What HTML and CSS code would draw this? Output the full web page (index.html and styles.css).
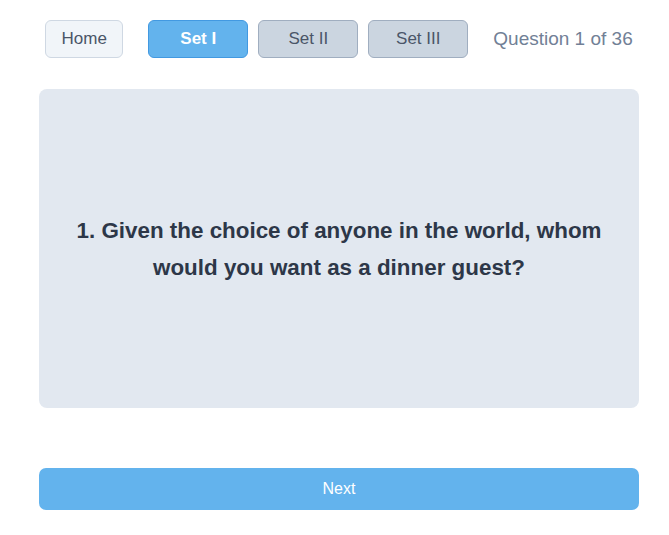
FILE: index.html
```html
<!DOCTYPE html>
<html>
<head>
<meta charset="utf-8">
<link rel="stylesheet" href="styles.css">
</head>
<body>
<div class="app">
  <div class="header">
    <button class="btn btn-home">Home</button>
    <div class="sets">
      <button class="btn btn-set active">Set I</button>
      <button class="btn btn-set">Set II</button>
      <button class="btn btn-set">Set III</button>
    </div>
    <span class="counter">Question 1 of 36</span>
  </div>
  <div class="card">
    <p class="question">1. Given the choice of anyone in the world, whom would you want as a dinner guest?</p>
  </div>
  <button class="next">Next</button>
</div>
</body>
</html>
```
FILE: styles.css
```css
html, body {
  margin: 0;
  padding: 0;
  background: #ffffff;
  font-family: "Liberation Sans", Arial, sans-serif;
}
.app {
  width: 600px;
  margin-left: 39px;
  padding-top: 20px;
}
.header {
  display: flex;
  justify-content: center;
  align-items: center;
  height: 38px;
}
.btn {
  box-sizing: border-box;
  height: 38px;
  border-radius: 6px;
  font-family: inherit;
  font-size: 17px;
  padding: 0;
  cursor: pointer;
}
.btn-home {
  width: 78px;
  background: #f1f5f9;
  border: 1px solid #cfd8e3;
  color: #4a5568;
  margin-right: 25px;
}
.sets {
  display: flex;
  gap: 10px;
}
.btn-set {
  width: 100px;
  background: #cbd5e0;
  border: 1px solid #a0aec0;
  color: #4a5568;
}
.btn-set.active {
  background: #63b3ed;
  border-color: #4299e1;
  color: #ffffff;
  font-weight: bold;
}
.counter {
  margin-left: 25px;
  font-size: 19px;
  color: #718096;
}
.card {
  margin-top: 31px;
  height: 319px;
  background: #e2e8f0;
  border-radius: 8px;
  display: flex;
  align-items: center;
  justify-content: center;
  padding: 0 28px;
  box-sizing: border-box;
}
.question {
  margin: 0;
  text-align: center;
  font-weight: bold;
  font-size: 22.4px;
  line-height: 37px;
  color: #2d3748;
}
.next {
  display: block;
  margin-top: 60px;
  width: 600px;
  height: 42px;
  border: none;
  border-radius: 7px;
  background: #63b3ed;
  color: #ffffff;
  font-family: inherit;
  font-size: 16px;
  cursor: pointer;
}
```
